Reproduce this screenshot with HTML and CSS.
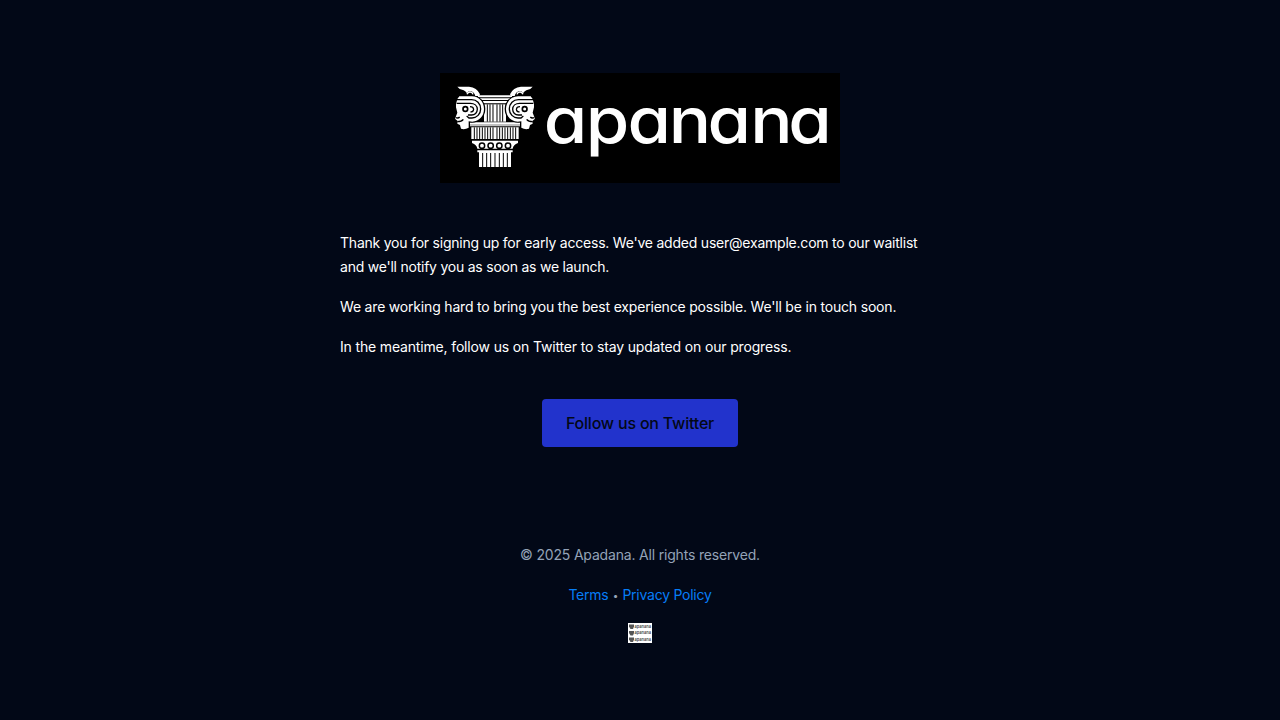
FILE: index.html
```html
<!DOCTYPE html>
<html lang="en">
<head>
<meta charset="utf-8">
<title>Apanana</title>
<link rel="stylesheet" href="styles.css">
</head>
<body>
<main class="email">
  <svg class="logo" viewBox="0 0 400 110" role="img" aria-label="apanana">
    <rect width="400" height="110" fill="#000"/>
    <g id="column" transform="translate(10 7) scale(.33333)">
      <g fill="#fff">
        <path d="M84 46h102v6H84zM84 55h102v5H84zM84 63h102v7H84z"/>
        <path d="M102 73h66v52h-66z"/>
        <path d="M60 127h150v7H60zM60 136h150v3H60z"/>
        <path d="M64 142h142v35H64z"/>
        <path d="M66 182h138v7q-14 5-16 17H82q-2-12-16-17z"/>
        <path d="M82 211h106v6H82zM87 217h96v44H87z"/>
      </g>
      <path d="M112 73v52M120 73v52M129 73v52M141 73v52M150 73v52M158 73v52M73 142v35M81 142v35M89 142v35M97 142v35M105 142v35M113 142v35M121 142v35M129 142v35M141 142v35M149 142v35M157 142v35M165 142v35M173 142v35M181 142v35M189 142v35M197 142v35M98 219v42M110 219v42M122 219v42M135 219v42M148 219v42M160 219v42M172 219v42" stroke="#000" stroke-width="3"/>
      <g fill="#fff" stroke="#000" stroke-width="4.5"><circle cx="96" cy="197" r="8"/><circle cx="122" cy="197" r="8"/><circle cx="148" cy="197" r="8"/><circle cx="174" cy="197" r="8"/></g>
      <g id="head">
        <circle cx="65" cy="87" r="41" fill="#000"/>
        <path d="M28 49H66C87 49 102 66 102 87C102 108 88 124 67 125L56 124L56 143Q44 150 33 146L30 135L22 131L23 123L15 116L22 98L18 82V72L22 57Z" fill="#fff"/>
        <path d="M20 59H65C80 59 92 71 92 87C92 102 80 114 66 114H57L50 108M20 70H61C73 70 82 77 82 88C82 98 74 105 65 105H54" fill="none" stroke="#000" stroke-width="4"/>
        <path d="M60 80Q70 80 71 88Q70 96 61 96" fill="none" stroke="#000" stroke-width="3.500"/>
        <circle cx="46" cy="87" r="7" fill="#fff" stroke="#000" stroke-width="5"/>
        <path d="M17 113Q25 116 29 111M22 125Q35 125 40 118" fill="none" stroke="#000" stroke-width="4"/>
        <path d="M22 20H57Q81 22 90 43L87 48H76Q73 36 62 33Q53 33 51 40Q47 34 41 31Q28 29 22 20Z" fill="#fff"/>
        <path d="M51 43Q54 35 61 36Q68 37 69 43" fill="none" stroke="#fff" stroke-width="4"/>
      </g>
      <use href="#head" transform="translate(270 0) scale(-1 1)"/>
    </g>
    <text class="wordmark" transform="scale(1.1 1)" y="70.500" x="94.300 132.500 170.500 208 243.200 282 316.600">apanana</text>
  </svg>
  <section class="message">
    <p><span class="intro">Thank you for signing up for early access. We've added user@example.com to our waitlist</span> <span class="notice">and we'll notify you as soon as we launch.</span></p>
    <p class="progress">We are working hard to bring you the best experience possible. We'll be in touch soon.</p>
    <p class="follow">In the meantime, follow us on Twitter to stay updated on our progress.</p>
  </section>
  <a class="button" href="#">Follow us on Twitter</a>
  <footer class="footer">
    <p>© 2025 Apadana. All rights reserved.</p>
    <p class="links"><a href="#">Terms</a><span class="dot">•</span><a href="#">Privacy Policy</a></p>
    <svg class="thumb" viewBox="0 0 24 20">
      <rect width="24" height="20" fill="#fff"/>
      <g id="row"><path d="M1 1.500h5v2L5 6H2.500L1 3.500Z" fill="#555"/><text class="mini" x="6.500" y="4.500" textLength="16.500" lengthAdjust="spacingAndGlyphs">apanana</text></g>
      <use href="#row" y="6.500"/><use href="#row" y="13"/>
    </svg>
  </footer>
</main>
</body>
</html>
```
FILE: styles.css
```css
body {
  margin: 0;
  background: #020817;
  color: #fff;
  font-family: Inter, "Liberation Sans", sans-serif;
  font-size: 14px;
  font-weight: 400;
  line-height: 24px;
}
.email {
  display: flex;
  flex-direction: column;
  align-items: center;
  width: 600px;
  margin: 0 auto;
  padding-top: 73px;
}
.logo { display: block; width: 400px; height: 110px; }
.wordmark {
  fill: #fff;
  font-family: Inter, sans-serif;
  font-size: 64px;
  font-weight: 500;
  font-feature-settings: "cv11";
}
.message { width: 100%; margin: 32px 0; }
.message p { margin: 16px 0; }
.message p:last-child { margin-bottom: 8px; }
.intro, .notice { display: block; white-space: nowrap; }
.intro { letter-spacing: -0.22px; }
.notice { letter-spacing: -0.23px; }
.progress { letter-spacing: -0.19px; }
.follow { letter-spacing: -0.16px; }
.button {
  box-sizing: border-box;
  width: 196px;
  height: 48px;
  padding: 12px 0;
  border-radius: 4px;
  background: #2233cc;
  color: #020817;
  font-size: 16px;
  font-weight: 500;
  letter-spacing: -0.2px;
  text-align: center;
  text-decoration: none;
}
.footer {
  display: flex;
  flex-direction: column;
  align-items: center;
  gap: 16px;
  margin-top: 96px;
  color: #94a3b8;
  letter-spacing: -0.18px;
}
.footer p { margin: 0; }
.links { display: flex; letter-spacing: -0.25px; }
.footer a { color: #067df7; text-decoration: none; }
.dot { width: 14px; font-size: 10px; text-align: center; }
.thumb { display: block; width: 24px; height: 20px; }
.mini { font-size: 4.5px; font-weight: 600; fill: #444; letter-spacing: 0; }
```
